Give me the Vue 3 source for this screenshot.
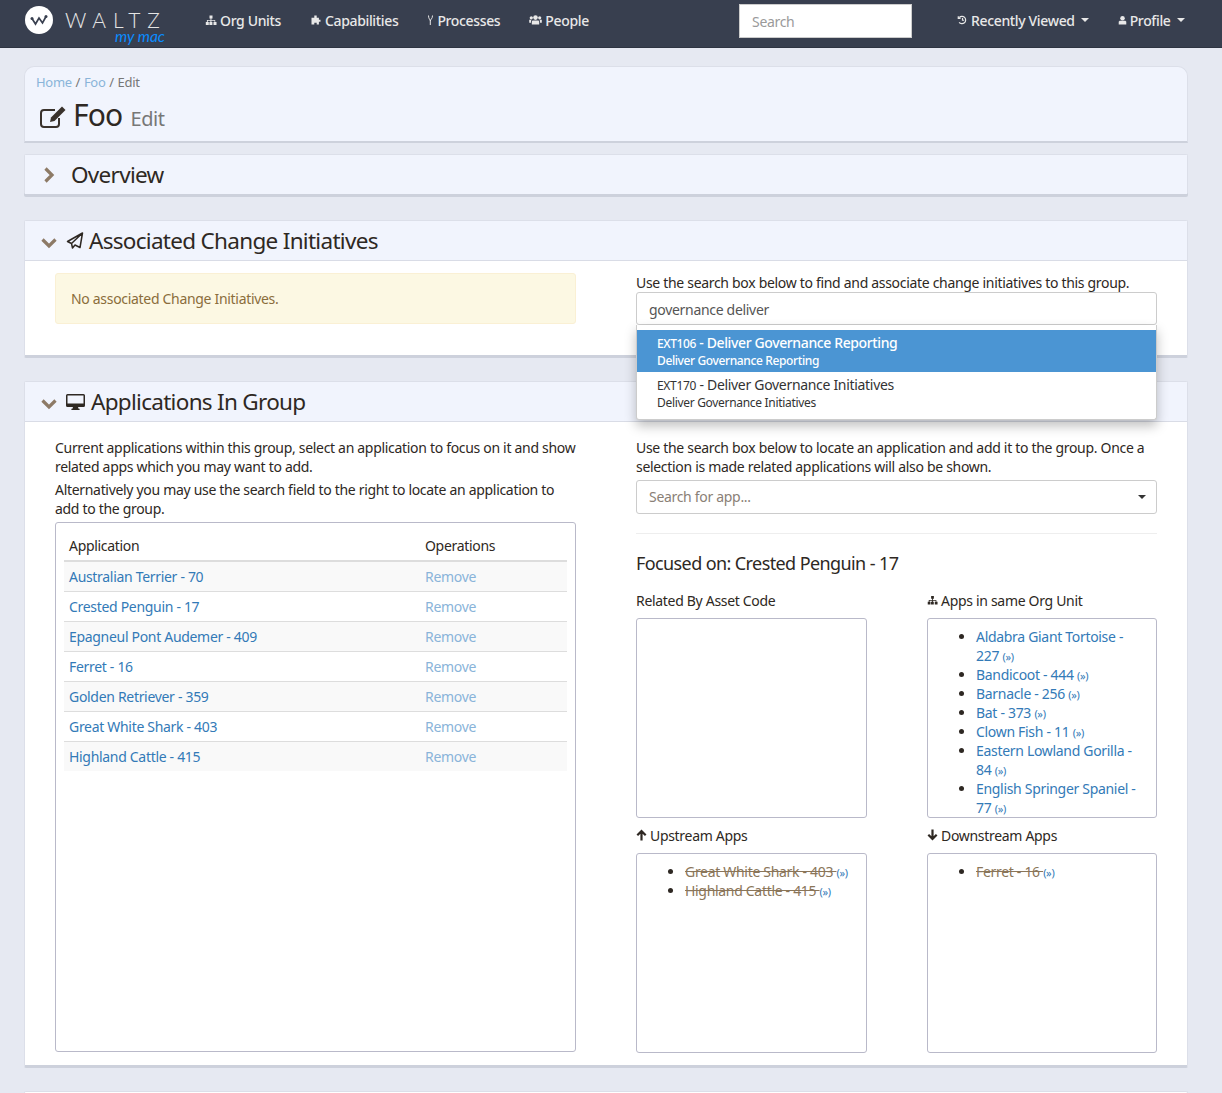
<script setup>
const members = [
  'Australian Terrier - 70', 'Crested Penguin - 17', 'Epagneul Pont Audemer - 409', 'Ferret - 16',
  'Golden Retriever - 359', 'Great White Shark - 403', 'Highland Cattle - 415'
]
const orgApps = [
  'Aldabra Giant Tortoise - 227', 'Bandicoot - 444', 'Barnacle - 256', 'Bat - 373',
  'Clown Fish - 11', 'Eastern Lowland Gorilla - 84', 'English Springer Spaniel - 77'
]
</script>

<template>
  <div class="page">
    <nav class="navbar">
      <div class="brand">
        <svg class="logo" viewBox="0 0 28 28" width="28" height="28">
          <circle cx="14" cy="14" r="14" fill="#fff" />
          <path d="M7 12.5 L10.5 18 L14 12 L17.5 17 L21 10.5" fill="none" stroke="#383f4f" stroke-width="1.7" />
          <circle cx="7" cy="12.5" r="1.5" fill="#383f4f" />
          <circle cx="21" cy="10.5" r="1.5" fill="#383f4f" />
        </svg>
        <div class="wordmark">
          <div class="waltz">WALTZ</div>
          <div class="mymac">my mac</div>
        </div>
      </div>
      <div class="nav-links">
        <a class="nav-link">
          <svg class="nav-ico" viewBox="0 0 12 12" width="12" height="12"><path fill="currentColor" d="M4.500 1.500h3v3H6.400v1.400h3.800v2.100h1.300v3h-3V8h1v-1.300H6.400V8h1v3h-3V8h1V6.700H2.800V8h1v3h-3V8h1.100V5.900h3.600V4.500H4.500z" /></svg>
          Org Units
        </a>
        <a class="nav-link">
          <svg class="nav-ico" viewBox="0 0 12 12" width="12" height="12"><path fill="currentColor" d="M4.300 1.500h2.400v2.300h2.200v2h1.600v1.900H8.900v2.800H6.700V8.800H4.300v1.700H1.500V3.800h2.800z" /></svg>
          Capabilities
        </a>
        <a class="nav-link">
          <svg class="nav-ico" viewBox="0 0 7 12" width="7" height="12"><path fill="none" stroke="currentColor" stroke-width="1" d="M1.500 1.500C1.500 5 3 5 3.300 7C3.600 5 5.500 5 5.500 1.500M3.300 7V11" /></svg>
          Processes
        </a>
        <a class="nav-link">
          <svg class="nav-ico" viewBox="0 0 13 12" width="13" height="12"><g fill="currentColor"><circle cx="6.500" cy="3.600" r="2.300" /><circle cx="2.300" cy="3.800" r="1.600" /><circle cx="10.700" cy="3.800" r="1.600" /><path d="M3.500 6.400h6l.7 1v3.200H2.800V7.400zM.2 5.800h2.300L2 7v1.800H.2zM12.800 5.800h-2.300L11 7v1.800h1.800z" /></g></svg>
          People
        </a>
      </div>
      <div class="nav-search">Search</div>
      <div class="nav-right">
        <a class="nav-link">
          <svg class="nav-ico" viewBox="0 0 12 12" width="11" height="12"><path fill="none" stroke="currentColor" stroke-width="1.300" d="M2.500 3.300A4 4 0 1 1 2.300 8.500M1.400 1.800v2.500h2.500M6 3.800V6.300H7.800" /></svg>
          Recently Viewed
          <span class="caret"></span>
        </a>
        <a class="nav-link">
          <svg class="nav-ico" viewBox="0 0 10 12" width="9" height="12"><g fill="currentColor"><circle cx="5" cy="4" r="2.500" /><path d="M1.800 6.700h6.400l1 1.200v3H.8v-3z" /></g></svg>
          Profile
          <span class="caret"></span>
        </a>
      </div>
    </nav>

    <main class="content">
      <header class="hero">
        <div class="crumbs"><a class="light-link">Home</a> / <a class="light-link">Foo</a> / Edit</div>
        <h1 class="hero-title">
          <svg class="edit-ico" viewBox="0 0 26 23" width="26" height="23">
            <path fill="none" stroke="#3a322c" stroke-width="2" d="M15 4H4A3 3 0 0 0 1 7v11A3 3 0 0 0 4 21h12a3 3 0 0 0 3-3V12" />
            <path fill="#3a322c" d="M22 .5l3.500 3.500-11 11-4.500 1 1-4.500z" />
          </svg>
          <span>Foo</span>
          <small>Edit</small>
        </h1>
      </header>

      <section class="panel collapsed">
        <div class="panel-head overview">
          <svg class="chev-right" viewBox="0 0 12 16" width="12" height="16"><path fill="none" stroke="#8d7a66" stroke-width="3.200" d="M2.500 1.500L9 8L2.500 14.500" /></svg>
          <h2>Overview</h2>
        </div>
      </section>

      <section class="panel">
        <div class="panel-head">
          <svg class="chev-down" viewBox="0 0 16 12" width="16" height="12"><path fill="none" stroke="#8d7a66" stroke-width="3.200" d="M1.500 2.500L8 9L14.500 2.500" /></svg>
          <svg class="head-ico plane" viewBox="0 0 18 18" width="18" height="19">
            <path fill="none" stroke="#2e2823" stroke-width="1.500" stroke-linejoin="round" d="M16.500 1.500L1.500 10L5.500 12L16.500 1.500L14 16L9 13.500L6.500 16.500L5.500 12" />
          </svg>
          <h2>Associated Change Initiatives</h2>
        </div>
        <div class="columns initiatives">
          <div class="col">
            <div class="alert">No associated Change Initiatives.</div>
          </div>
          <div class="col search-col">
            <p class="para">Use the search box below to find and associate change initiatives to this group.</p>
            <div class="input typed">governance deliver</div>
            <ul class="typeahead">
              <li class="active">
                <div class="t-main"><span class="code">EXT106</span> - Deliver Governance Reporting</div>
                <div class="t-sub">Deliver Governance Reporting</div>
              </li>
              <li>
                <div class="t-main"><span class="code">EXT170</span> - Deliver Governance Initiatives</div>
                <div class="t-sub">Deliver Governance Initiatives</div>
              </li>
            </ul>
          </div>
        </div>
      </section>

      <section class="panel">
        <div class="panel-head">
          <svg class="chev-down" viewBox="0 0 16 12" width="16" height="12"><path fill="none" stroke="#8d7a66" stroke-width="3.200" d="M1.500 2.500L8 9L14.500 2.500" /></svg>
          <svg class="head-ico" viewBox="0 0 19 17" width="19" height="17">
            <path fill="#2e2823" fill-rule="evenodd" d="M1.500 1h16A1.500 1.500 0 0 1 19 2.500v10a1.500 1.500 0 0 1-1.500 1.500H12l.6 1.800h1v1.200H5.400v-1.200h1L7 14H1.500A1.500 1.500 0 0 1 0 12.500v-10A1.500 1.500 0 0 1 1.500 1zM1.500 2.500v8h16v-8z" />
          </svg>
          <h2>Applications In Group</h2>
        </div>
        <div class="columns apps">
          <div class="col">
            <p class="para">Current applications within this group, select an application to focus on it and show related apps which you may want to add.</p>
            <p class="para">Alternatively you may use the search field to the right to locate an application to add to the group.</p>
            <div class="box members">
              <table class="table">
                <thead>
                  <tr><th class="c1">Application</th><th>Operations</th></tr>
                </thead>
                <tbody>
                  <tr v-for="m in members" :key="m">
                    <td class="c1"><a class="link">{{ m }}</a></td>
                    <td><a class="light-link">Remove</a></td>
                  </tr>
                </tbody>
              </table>
            </div>
          </div>
          <div class="col">
            <p class="para">Use the search box below to locate an application and add it to the group. Once a selection is made related applications will also be shown.</p>
            <div class="input select">
              <span>Search for app...</span>
              <span class="caret dark"></span>
            </div>
            <hr class="rule" />
            <h3 class="focus">Focused on: Crested Penguin - 17</h3>
            <div class="grid">
              <div class="cell">
                <div class="label">Related By Asset Code</div>
                <div class="box tile"></div>
              </div>
              <div class="cell">
                <div class="label">
                  <svg class="label-ico" viewBox="0 0 12 12" width="11" height="12"><path fill="#2e2823" d="M4.500 1.500h3v3H6.400v1.400h3.800v2.100h1.300v3h-3V8h1v-1.300H6.400V8h1v3h-3V8h1V6.700H2.800V8h1v3h-3V8h1.100V5.900h3.600V4.500H4.500z" /></svg>
                  Apps in same Org Unit
                </div>
                <div class="box tile">
                  <ul class="app-list">
                    <li v-for="a in orgApps" :key="a"><a class="link">{{ a }}</a> <a class="jump">(»)</a></li>
                  </ul>
                </div>
              </div>
              <div class="cell">
                <div class="label">
                  <svg class="label-ico" viewBox="0 0 11 12" width="11" height="12"><path fill="none" stroke="#2e2823" stroke-width="2.200" d="M5.500 11.500V2.500M1.300 6.300L5.500 2.100L9.700 6.300" /></svg>
                  Upstream Apps
                </div>
                <div class="box tile">
                  <ul class="app-list">
                    <li><a class="struck">Great White Shark - 403 </a><a class="jump">(»)</a></li>
                    <li><a class="struck">Highland Cattle - 415 </a><a class="jump">(»)</a></li>
                  </ul>
                </div>
              </div>
              <div class="cell">
                <div class="label">
                  <svg class="label-ico" viewBox="0 0 11 12" width="11" height="12"><path fill="none" stroke="#2e2823" stroke-width="2.200" d="M5.500 .5V9.500M1.300 5.700L5.500 9.900L9.700 5.700" /></svg>
                  Downstream Apps
                </div>
                <div class="box tile">
                  <ul class="app-list">
                    <li><a class="struck">Ferret - 16 </a><a class="jump">(»)</a></li>
                  </ul>
                </div>
              </div>
            </div>
          </div>
        </div>
      </section>

      <section class="panel stub"></section>
    </main>
  </div>
</template>

<style>
html, body { margin: 0; background: #e6e9f2; }
</style>

<style scoped>
.page {
  height: 1093px;
  overflow: hidden;
  background: #e6e9f2;
  color: #2e2823;
  font: 14px/19px "Noto Sans", "Open Sans", sans-serif;
  letter-spacing: -0.31px;
}
a { text-decoration: none; }

.navbar {
  height: 43px;
  padding-top: 4px;
  border-bottom: 1px solid #2e3442;
  background: #383f4f;
  display: flex;
  align-items: flex-start;
  color: #e8e8e8;
}
.brand { display: flex; width: 205px; padding-left: 25px; margin-top: -4px; box-sizing: border-box; align-items: flex-start; }
.logo { margin-top: 6px; flex: none; }
.wordmark { margin-left: 12px; position: relative; }
.waltz { margin-top: 7px; font-size: 21px; line-height: 25px; letter-spacing: 6.800px; font-family: "Lato", sans-serif; font-weight: 300; color: #e5e5e5; }
.mymac { position: absolute; top: 28px; left: 50px; width: 60px; font: italic 15.500px/16px "Lato", sans-serif; color: #0a8cff; letter-spacing: 0; }

.nav-links { display: flex; gap: 29px; width: 534px; height: 32px; align-items: center; }
.nav-link { display: inline-flex; align-items: center; gap: 3px; color: #e8e8e8; font-weight: 500; white-space: nowrap; letter-spacing: -0.35px; }
.nav-ico { flex: none; }
.nav-search {
  width: 173px;
  height: 34px;
  box-sizing: border-box;
  padding: 0 12px;
  background: #fff;
  border: 1px solid #ccc;
  color: #9a9a9a;
  line-height: 34px;
}
.nav-right { display: flex; gap: 29px; margin-left: 45px; height: 32px; align-items: center; }
.caret { display: inline-block; margin-left: 3px; border: 4px solid transparent; border-top-color: currentColor; border-bottom: 0; }
.caret.dark { color: #333; margin: 0; }

.content { padding: 18px 34px 0 24px; display: flex; flex-direction: column; }

.hero {
  height: 68px;
  background: #f1f4fd;
  border: 1px solid #dcdfe9;
  border-bottom: 2px solid #cdd1dc;
  border-radius: 10px 10px 0 0;
  padding: 6px 11px 0;
  margin-bottom: 11px;
}
.crumbs { color: #777; font-size: 13px; line-height: 18px; letter-spacing: -0.3px; word-spacing: 0.700px; }
.light-link { color: #8ab4d9; }
.hero-title { margin: 6px 0 0 4px; display: flex; align-items: baseline; font-size: 30px; line-height: 36px; font-weight: 400; color: #2e2823; letter-spacing: -0.8px; }
.edit-ico { margin-right: 7px; align-self: center; }
.hero-title small { margin-left: 8px; font-size: 20px; color: #777; font-weight: 400; letter-spacing: -0.4px; }

.panel {
  background: #fff;
  border: 1px solid #dcdfe9;
  border-bottom: 3px solid #cdd1dc;
  margin-bottom: 23px;
  border-radius: 2px;
}
.collapsed { border-bottom: 0; box-shadow: 0 3px 0 #cdd1dc; margin-bottom: 26px; }
.panel-head {
  height: 39px;
  background: #f1f4fd;
  border-bottom: 1px solid #d9dce6;
  display: flex;
  align-items: center;
  padding-left: 16px;
}
.collapsed .panel-head { border-bottom: 0; height: 39px; }
.overview { padding-left: 18px; }
.panel-head h2 { margin: 0; font-size: 22.500px; line-height: 30px; font-weight: 400; letter-spacing: -0.7px; color: #2e2823; }
.overview h2 { margin-left: 16px; }
.chev-down { margin-right: 9px; margin-top: 5px; }
.head-ico { margin-right: 6px; }
.plane { margin-right: 5px; }

.columns { display: flex; gap: 60px; padding: 0 30px; }
.col { width: 521px; flex: none; }
.initiatives { height: 94px; padding-top: 12px; box-sizing: border-box; }
.alert {
  height: 49px;
  padding: 0 15px;
  background: #fcf8e3;
  border: 1px solid #faf0d4;
  border-radius: 3px;
  color: #8a6d3b;
  line-height: 49px;
}
.search-col { position: relative; }
.para { margin: 0 0 4px; }
.input {
  height: 34px;
  box-sizing: border-box;
  border: 1px solid #ccc;
  border-radius: 3px;
  padding: 0 12px;
  line-height: 32px;
  background: #fff;
}
.typed { color: #555; height: 33px; line-height: 33px; }
.search-col .para { margin-bottom: 0; }

.typeahead {
  position: absolute;
  z-index: 5;
  left: 0;
  right: 0;
  top: 52px;
  margin: 0;
  padding: 5px 0;
  list-style: none;
  background: #fff;
  border: 1px solid #ccc;
  border-top: 0;
  border-radius: 0 0 3px 3px;
  box-shadow: 0 6px 12px rgba(0,0,0,.25);
}
.typeahead li { height: 42px; padding: 3px 20px 0; box-sizing: border-box; color: #333; }
.typeahead li.active { background: #4b95d3; color: #fff; font-weight: 500; letter-spacing: -0.38px; }
.t-main { line-height: 20px; }
.code { font-size: 12px; }
.t-sub { font-size: 12px; line-height: 16px; margin-top: -1px; }

.apps { padding-top: 16px; padding-bottom: 12px; }
.members { height: 530px; padding: 7px 8px 0; }
.box { box-sizing: border-box; border: 1px solid #b9b9c9; border-radius: 3px; background: #fff; }
.table { width: 100%; border-collapse: collapse; }
.table th { height: 30px; padding: 0 5px; text-align: left; font-weight: 400; border-bottom: 2px solid #ddd; }
.table th.c1, .table td.c1 { width: 346px; }
.table td { height: 30px; padding: 0 5px; border-top: 1px solid #ddd; box-sizing: border-box; }
.table tr:first-child td { border-top: 0; }
.table tbody tr:nth-child(odd) { background: #f9f9f9; }
.link { color: #337ab7; }

.select { display: flex; align-items: center; justify-content: space-between; color: #8a8076; padding-right: 10px; margin-top: 4px; }
.rule { margin: 19px 0 18px; border: 0; border-top: 1px solid #eee; }
.focus { margin: 0 0 17px; font-size: 18px; line-height: 22px; font-weight: 400; letter-spacing: -0.6px; }
.grid { display: grid; grid-template-columns: 231px 230px; column-gap: 60px; row-gap: 8px; }
.label { display: flex; align-items: center; gap: 3px; height: 18px; margin-bottom: 9px; }
.tile { height: 200px; overflow: hidden; }
.app-list { margin: 0; padding: 8px 8px 0 48px; }
.app-list li { line-height: 19px; }
.jump { font-size: 11px; line-height: 0; color: #337ab7; }
.struck { color: #8a7559; text-decoration: line-through; }

.stub { height: 20px; margin-bottom: 0; }
</style>
